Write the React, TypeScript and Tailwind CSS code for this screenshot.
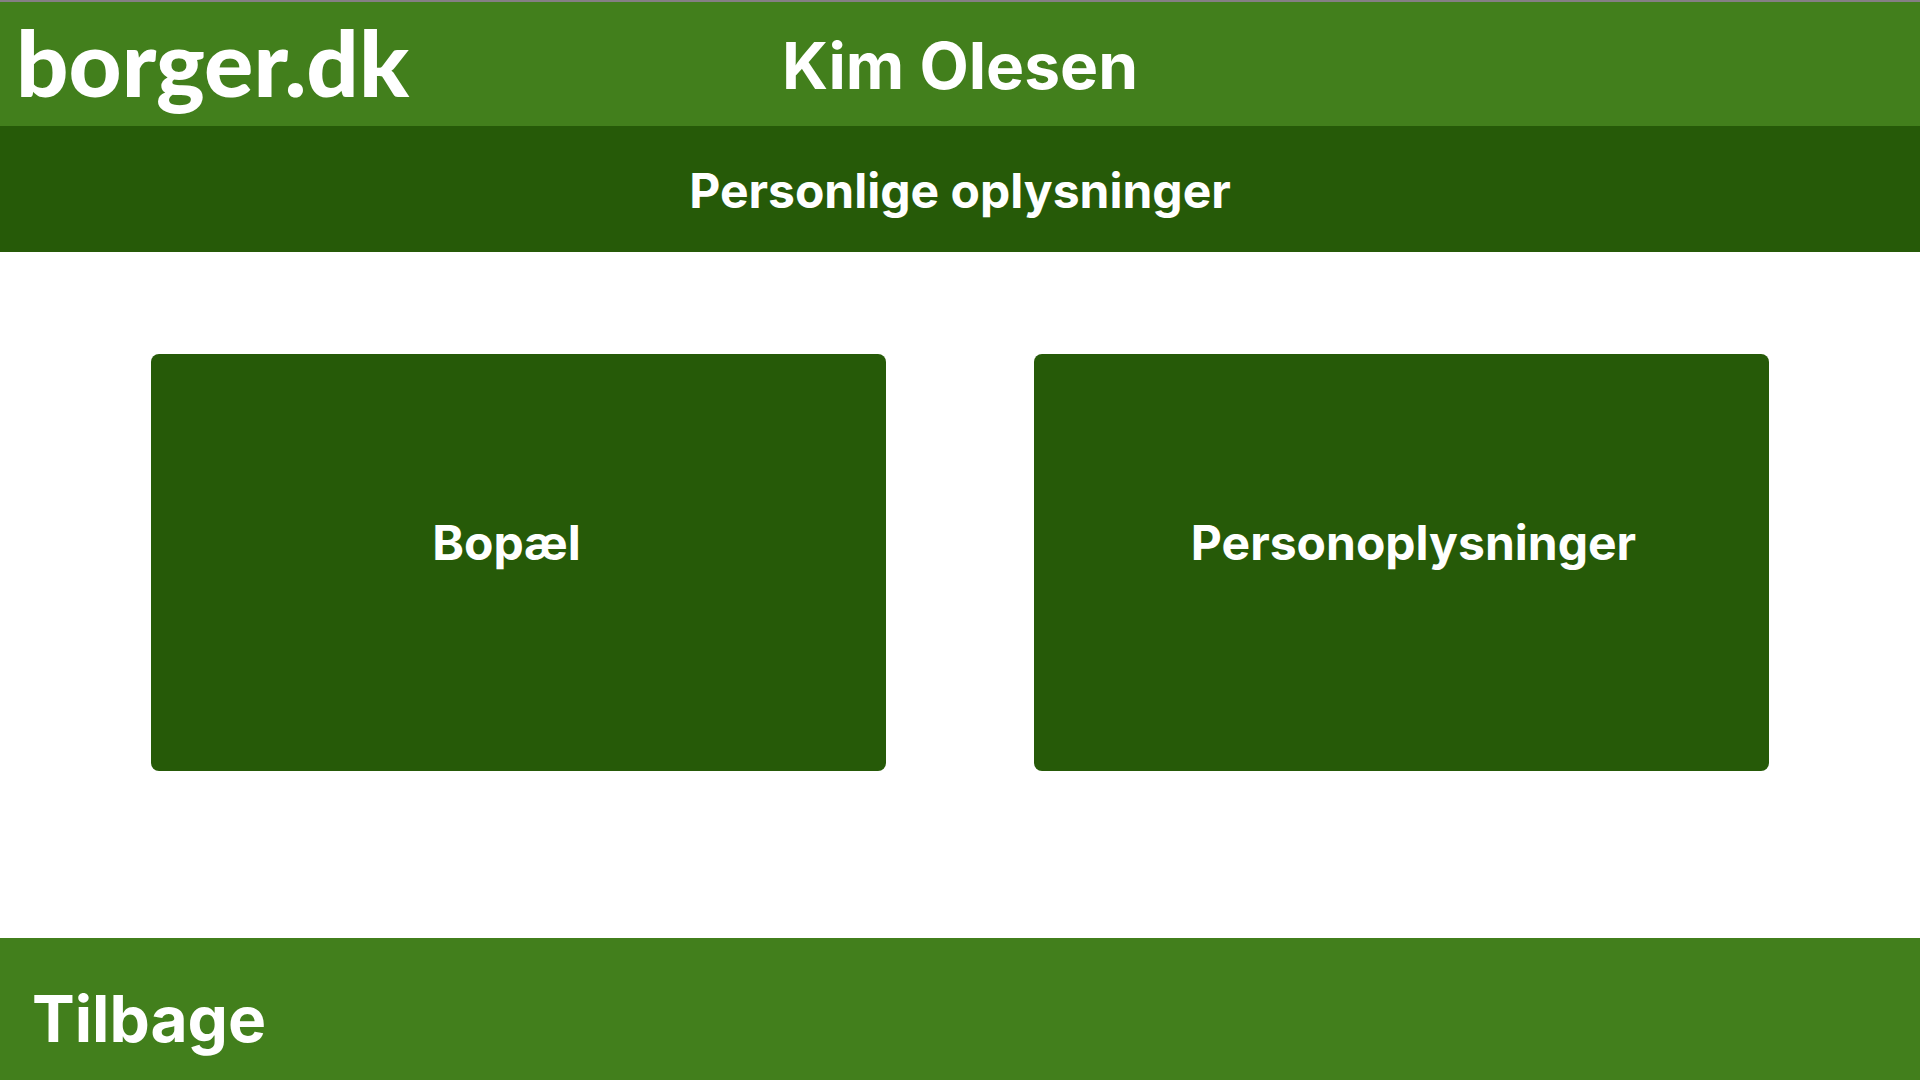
const cards = [
  { label: 'Bopæl', shift: 'pr-6' },
  { label: 'Personoplysninger', shift: 'pl-6' },
];

function Logo() {
  return (
    <a
      href="#"
      aria-label="borger.dk"
      className="justify-self-start pb-1 font-['Lato',sans-serif] text-[92px] leading-[92px] font-black whitespace-nowrap"
    >
      borger.dk
    </a>
  );
}

export default function App() {
  return (
    <div className="flex min-h-screen flex-col bg-white font-['Inter',sans-serif] font-bold text-white">
      <header className="grid h-[126px] grid-cols-[1fr_auto_1fr] items-center border-t-2 border-[#857f85] bg-[#427f1c] px-4">
        <Logo />
        <h1 className="pt-1 text-[64px] leading-[80px]">Kim Olesen</h1>
      </header>
      <div className="flex h-[126px] items-center justify-center bg-[#265a08] pt-1">
        <h2 className="text-[48px] leading-[60px]">Personlige oplysninger</h2>
      </div>
      <main className="grid flex-1 grid-cols-2 items-start gap-[148px] px-[151px] py-[102px]">
        {cards.map((card) => (
          <button
            key={card.label}
            type="button"
            className={`flex h-[417px] items-center justify-center rounded-lg bg-[#265a08] pb-10 text-[48px] leading-[60px] ${card.shift}`}
          >
            {card.label}
          </button>
        ))}
      </main>
      <footer className="flex h-[142px] items-center bg-[#427f1c] px-8 pt-5">
        <button type="button" className="text-[64px] leading-[80px]">
          Tilbage
        </button>
      </footer>
    </div>
  );
}
